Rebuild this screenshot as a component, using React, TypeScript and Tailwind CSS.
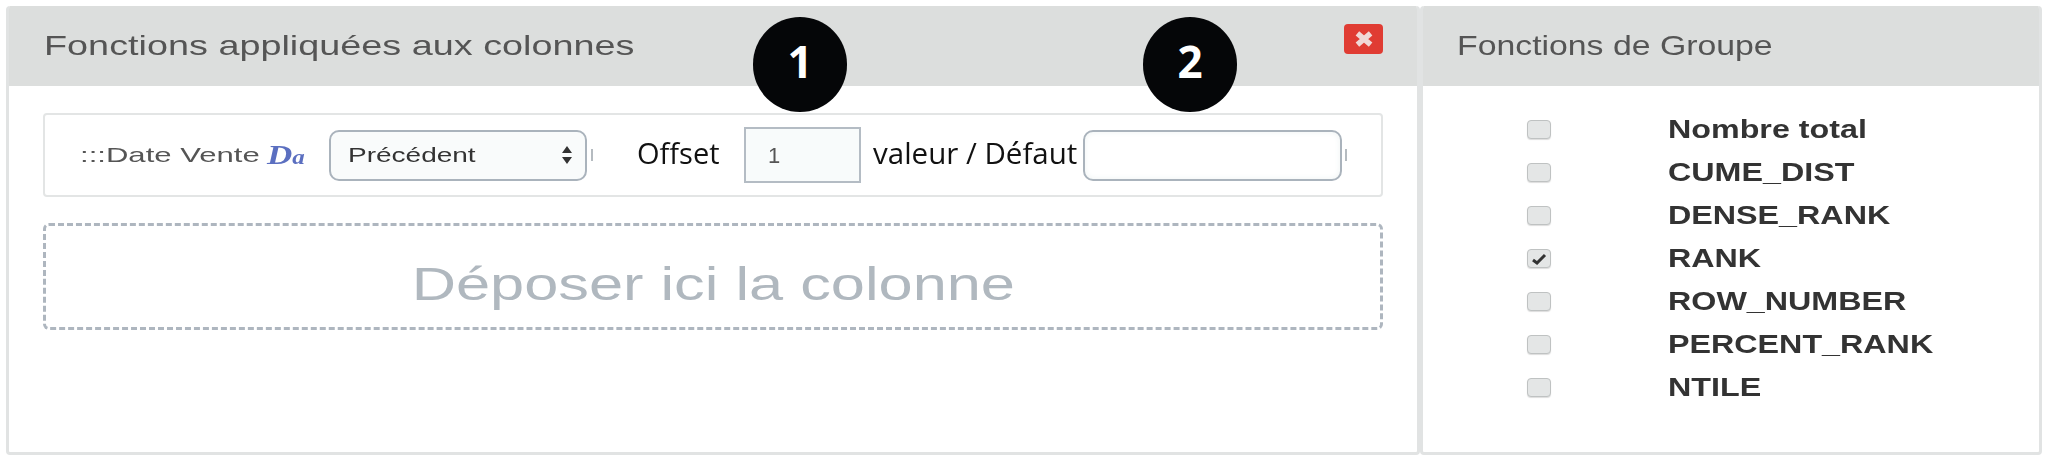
const sans = "font-['Liberation_Sans',Arial,sans-serif]";
const stretch = "inline-block origin-left whitespace-nowrap";
const labels = ["Nombre total", "CUME_DIST", "DENSE_RANK", "RANK", "ROW_NUMBER", "PERCENT_RANK", "NTILE"];

function Badge({ n, className }: { n: string; className: string }) {
  return (
    <div className={`absolute top-[17px] flex h-[95px] w-[94px] items-center justify-center rounded-full bg-[#050608] pb-[7px] font-['Open_Sans',sans-serif] text-[44px] font-bold leading-none text-white ${className}`}>
      {n}
    </div>
  );
}

function Tick({ className }: { className: string }) {
  return <span className={`h-[12px] w-[2px] shrink-0 bg-[#b5bbc0] ${className}`} />;
}

export default function App() {
  return (
    <div className={`relative flex h-[458px] w-[2046px] overflow-hidden bg-white pl-[6px] pr-[4px] pt-[6px] pb-[3px] ${sans}`}>
      <section className="flex w-[1414px] flex-col overflow-hidden rounded-[4px] border-x-[3px] border-b-[3px] border-t-0 border-[#e1e3e3] blur-[0.4px]">
        <header className="-mx-[3px] flex h-[80px] shrink-0 items-center justify-between bg-[#dcdedd] pl-[38px] pr-[37px]">
          <h2 className={`${stretch} scale-x-[1.35] text-[28px] font-normal leading-none text-[#555]`}>Fonctions appliquées aux colonnes</h2>
          <button className="mb-[14px] flex h-[30px] w-[39px] items-center justify-center rounded-[4px] bg-[#e03c33]">
            <svg width="22" height="18" viewBox="0 0 20 16" preserveAspectRatio="none">
              <path d="M4 3 L16 13 M16 3 L4 13" stroke="#f0d8d6" strokeWidth="5" />
            </svg>
          </button>
        </header>
        <div className="flex flex-col gap-[26px] pl-[34px] pr-[34px] pt-[27px]">
          <div className="flex h-[84px] items-center rounded-[4px] border-2 border-[#e3e5e5] pl-[35px]">
            <div className="flex w-[249px] shrink-0 items-center text-[21px] text-[#555]">
              <span className={`${stretch} scale-x-[1.48]`}>:::Date Vente</span>
              <span className="ml-[66px] inline-flex origin-left scale-x-[1.25] items-baseline font-['Liberation_Serif',serif] font-bold italic leading-none text-[#5b6fc0]">
                <span className="text-[28px]">D</span>
                <span className="text-[20px]">a</span>
              </span>
            </div>
            <div className="flex h-[51px] w-[258px] shrink-0 items-center justify-between rounded-[10px] border-2 border-[#aab3bc] bg-[#f9fbfb] pl-[17px] pr-[12px] text-[20px] text-[#333]">
              <span className={`${stretch} scale-x-[1.4]`}>Précédent</span>
              <svg width="12" height="20" viewBox="0 0 12 20"><path d="M6 1 L11 8 H1 Z M6 19 L1 12 H11 Z" fill="#333" /></svg>
            </div>
            <Tick className="ml-[4px]" />
            <span className="mb-[5px] ml-[44px] w-[107px] shrink-0 font-['Open_Sans',sans-serif] text-[29px] leading-none text-[#111]">Offset</span>
            <div className="flex h-[56px] w-[117px] shrink-0 items-center border-2 border-[#b4bcc4] bg-[#f8fbfb] pl-[22px] text-[22px] text-[#555]">1</div>
            <span className="mb-[5px] ml-[12px] w-[210px] shrink-0 whitespace-nowrap font-['Open_Sans',sans-serif] text-[29.5px] leading-none text-[#111]">valeur / Défaut</span>
            <div className="h-[51px] w-[259px] shrink-0 rounded-[10px] border-2 border-[#aab3bc] bg-white shadow-[inset_0_0_6px_#eef3f3]" />
            <Tick className="ml-[3px]" />
          </div>
          <div className="flex h-[107px] items-center justify-center rounded-[6px] border-[3px] border-dashed border-[#aeb6bf] pt-[16px] text-[46px] text-[#b0b8bf]">
            <span className="inline-block scale-x-[1.333] whitespace-nowrap">Déposer ici la colonne</span>
          </div>
        </div>
      </section>
      <section className="flex flex-1 flex-col overflow-hidden rounded-[4px] border-x-[3px] border-b-[3px] border-[#e1e3e3] blur-[0.4px]">
        <header className="-mx-[3px] flex h-[80px] shrink-0 items-center bg-[#dcdedd] pl-[37px]">
          <h2 className={`${stretch} scale-x-[1.207] text-[28px] font-normal leading-none text-[#555]`}>Fonctions de Groupe</h2>
        </header>
        <ul className="flex flex-col pl-[104px] pt-[22px]">
          {labels.map((l) => (
            <li key={l} className="flex h-[43px] items-center">
              <span className="flex h-[19px] w-[24px] shrink-0 items-center justify-center rounded-[4px] border border-[#bfc2c2] bg-[#e4e6e6] shadow-[0_1px_1px_#ddd]">
                {l === "RANK" && (
                  <svg width="16" height="12" viewBox="0 0 16 12"><path d="M2 7 L6 10 L14 2" fill="none" stroke="#333" strokeWidth="3" /></svg>
                )}
              </span>
              <span className={`ml-[117px] ${stretch} scale-x-[1.29] text-[25px] font-bold leading-none text-[#333]`}>{l}</span>
            </li>
          ))}
        </ul>
      </section>
      <Badge n="1" className="left-[753px]" />
      <Badge n="2" className="left-[1143px]" />
    </div>
  );
}
